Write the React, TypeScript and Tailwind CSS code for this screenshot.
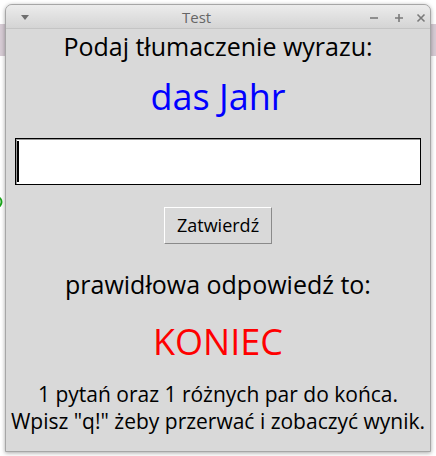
import React from "react";

const FONT = { fontFamily: '"Open Sans", "Noto Sans", sans-serif' };

function TitleBar() {
  return (
    <div className="relative flex h-[24px] items-center bg-gradient-to-b from-[#ececec] to-[#d4d4d4] border-b border-[#c4c4c4] rounded-t-[6px]">
      <svg width="8" height="5" viewBox="0 0 8 5" className="absolute left-[15px] top-[10px]">
        <path d="M0 0 L8 0 L4 5 Z" fill="#6e6e6e" />
      </svg>
      <div className="absolute left-[176px] top-[2px] text-[15px] leading-[20px] text-[#666]">Test</div>
      <svg width="10" height="10" viewBox="0 0 10 10" className="absolute left-[363px] top-[8px]">
        <path d="M1 5 H9" stroke="#7a7a7a" strokeWidth="1.6" />
      </svg>
      <svg width="10" height="10" viewBox="0 0 10 10" className="absolute left-[388px] top-[8px]">
        <path d="M1 5 H9 M5 1 V9" stroke="#7a7a7a" strokeWidth="1.6" />
      </svg>
      <svg width="10" height="10" viewBox="0 0 10 10" className="absolute left-[410px] top-[8px]">
        <path d="M1.5 1.5 L8.5 8.5 M8.5 1.5 L1.5 8.5" stroke="#7a7a7a" strokeWidth="1.6" />
      </svg>
    </div>
  );
}

export default function App() {
  return (
    <div className="relative h-[456px] w-[436px] overflow-hidden bg-white" style={FONT}>
      {/* desktop behind the window */}
      <div className="absolute left-0 top-[24px] h-[32px] w-[6px] bg-[#d6cbd4]" />
      <div className="absolute right-0 top-[24px] h-[32px] w-[6px] bg-[#d6cbd4]" />
      <svg width="6" height="14" viewBox="0 0 6 14" className="absolute left-0 top-[195px]">
        <path d="M-3 2 A4.5 5 0 0 1 1.5 7 A4.5 5 0 0 1 -3 12" fill="none" stroke="#1aa51a" strokeWidth="2" />
      </svg>

      <div className="relative ml-[5px] mt-[4px] h-[448px] w-[426px] rounded-t-[7px] border border-[#a6a6a6] bg-[#d9d9d9] shadow-[0_1px_4px_rgba(0,0,0,0.35)]">
        <TitleBar />

        <div className="flex flex-col items-center text-black">
          <div className="h-[35px] text-[25px] leading-[35px]">Podaj tłumaczenie wyrazu:</div>
          <div className="h-[66px] text-[36px] leading-[66px] text-[#0000ff]">das Jahr</div>

          <div className="relative mt-[8px] h-[47px] w-[406px] border border-black bg-white shadow-[inset_1px_1px_0_#9a9a9a]">
            <div className="absolute left-[1px] top-[2px] h-[41px] w-[2px] bg-black" />
          </div>

          <button className="mt-[22px] h-[37px] w-[108px] border border-t-white border-l-white border-b-[#8a8a8a] border-r-[#8a8a8a] bg-[#d9d9d9] text-[18px] leading-[35px] text-black">
            Zatwierdź
          </button>

          <div className="h-[80px] text-[25px] leading-[80px]">prawidłowa odpowiedź to:</div>
          <div className="h-[36px] text-[36px] leading-[36px] text-[#ff0000]">KONIEC</div>

          <div className="mt-[21px] text-center text-[21px] leading-[27px]">
            <div>1 pytań oraz 1 różnych par do końca.</div>
            <div>Wpisz "q!" żeby przerwać i zobaczyć wynik.</div>
          </div>
        </div>
      </div>
    </div>
  );
}
